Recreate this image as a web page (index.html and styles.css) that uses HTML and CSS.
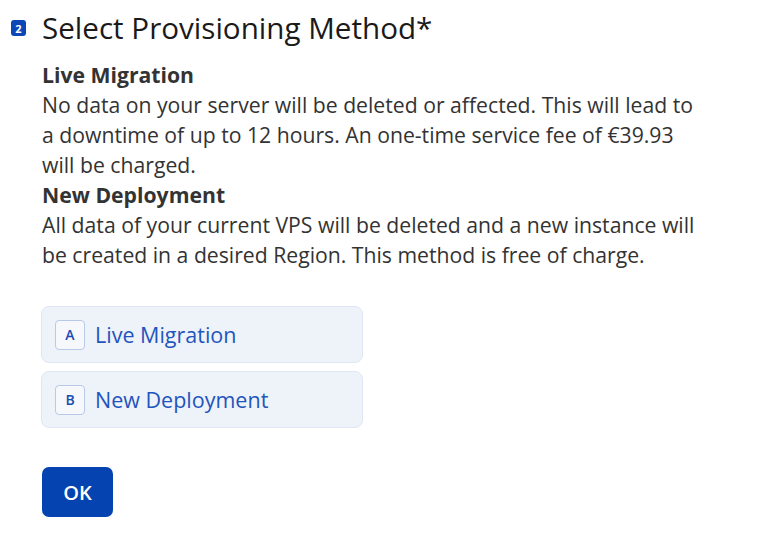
FILE: index.html
```html
<!DOCTYPE html>
<html lang="en">
<head>
<meta charset="utf-8">
<link rel="stylesheet" href="styles.css">
</head>
<body>
<div class="question">
  <div class="header">
    <span class="num">2</span>
    <h1 class="title">Select Provisioning Method*</h1>
  </div>
  <div class="desc">
    <p class="strong">Live Migration</p>
    <p>No data on your server will be deleted or affected. This will lead to<br>a downtime of up to 12 hours. An one-time service fee of €39.93<br>will be charged.</p>
    <p class="strong">New Deployment</p>
    <p>All data of your current VPS will be deleted and a new instance will<br>be created in a desired Region. This method is free of charge.</p>
  </div>
  <div class="options">
    <div class="option"><span class="key">A</span><span class="label">Live Migration</span></div>
    <div class="option"><span class="key">B</span><span class="label">New Deployment</span></div>
  </div>
  <button class="ok">OK</button>
</div>
</body>
</html>
```
FILE: styles.css
```css
* { box-sizing: border-box; }
body {
  margin: 0;
  background: #fff;
  font-family: "Open Sans", "Noto Sans", sans-serif;
  color: #333;
}
.question {
  padding: 8px 0 0 42px;
}
.header {
  display: flex;
  align-items: center;
  margin-left: -31px;
  gap: 16px;
}
.num {
  width: 15px;
  height: 16px;
  border-radius: 3px;
  background: #0b47b5;
  color: #fff;
  font-size: 11px;
  font-weight: 700;
  display: flex;
  align-items: center;
  justify-content: center;
}
.title {
  margin: 0;
  font-weight: 400;
  font-size: 29.6px;
  line-height: 40px;
  color: #1a1a1a;
}
.desc {
  margin-top: 12px;
  width: 720px;
  font-size: 21.2px;
  line-height: 30px;
}
.desc p { margin: 0; }
.desc .strong { font-weight: 700; }
.options {
  margin-top: 36px;
  display: flex;
  flex-direction: column;
  gap: 8px;
  width: 322px;
  margin-left: -1px;
}
.option {
  height: 57px;
  display: flex;
  align-items: center;
  padding-left: 13px;
  gap: 10px;
  background: #eef2f9;
  border: 1px solid #dfe6f3;
  border-radius: 8px;
}
.key {
  width: 30px;
  height: 30px;
  display: flex;
  align-items: center;
  justify-content: center;
  background: #f6f8fc;
  border: 1px solid #b9c9ea;
  border-radius: 4px;
  color: #1a4db3;
  font-size: 14px;
  font-weight: 600;
}
.label {
  color: #1f55bd;
  font-size: 21.5px;
}
.ok {
  margin-top: 39px;
  width: 71px;
  height: 50px;
  border: none;
  border-radius: 7px;
  background: #0443b0;
  color: #fff;
  font-family: inherit;
  font-size: 20px;
  font-weight: 600;
}
```
